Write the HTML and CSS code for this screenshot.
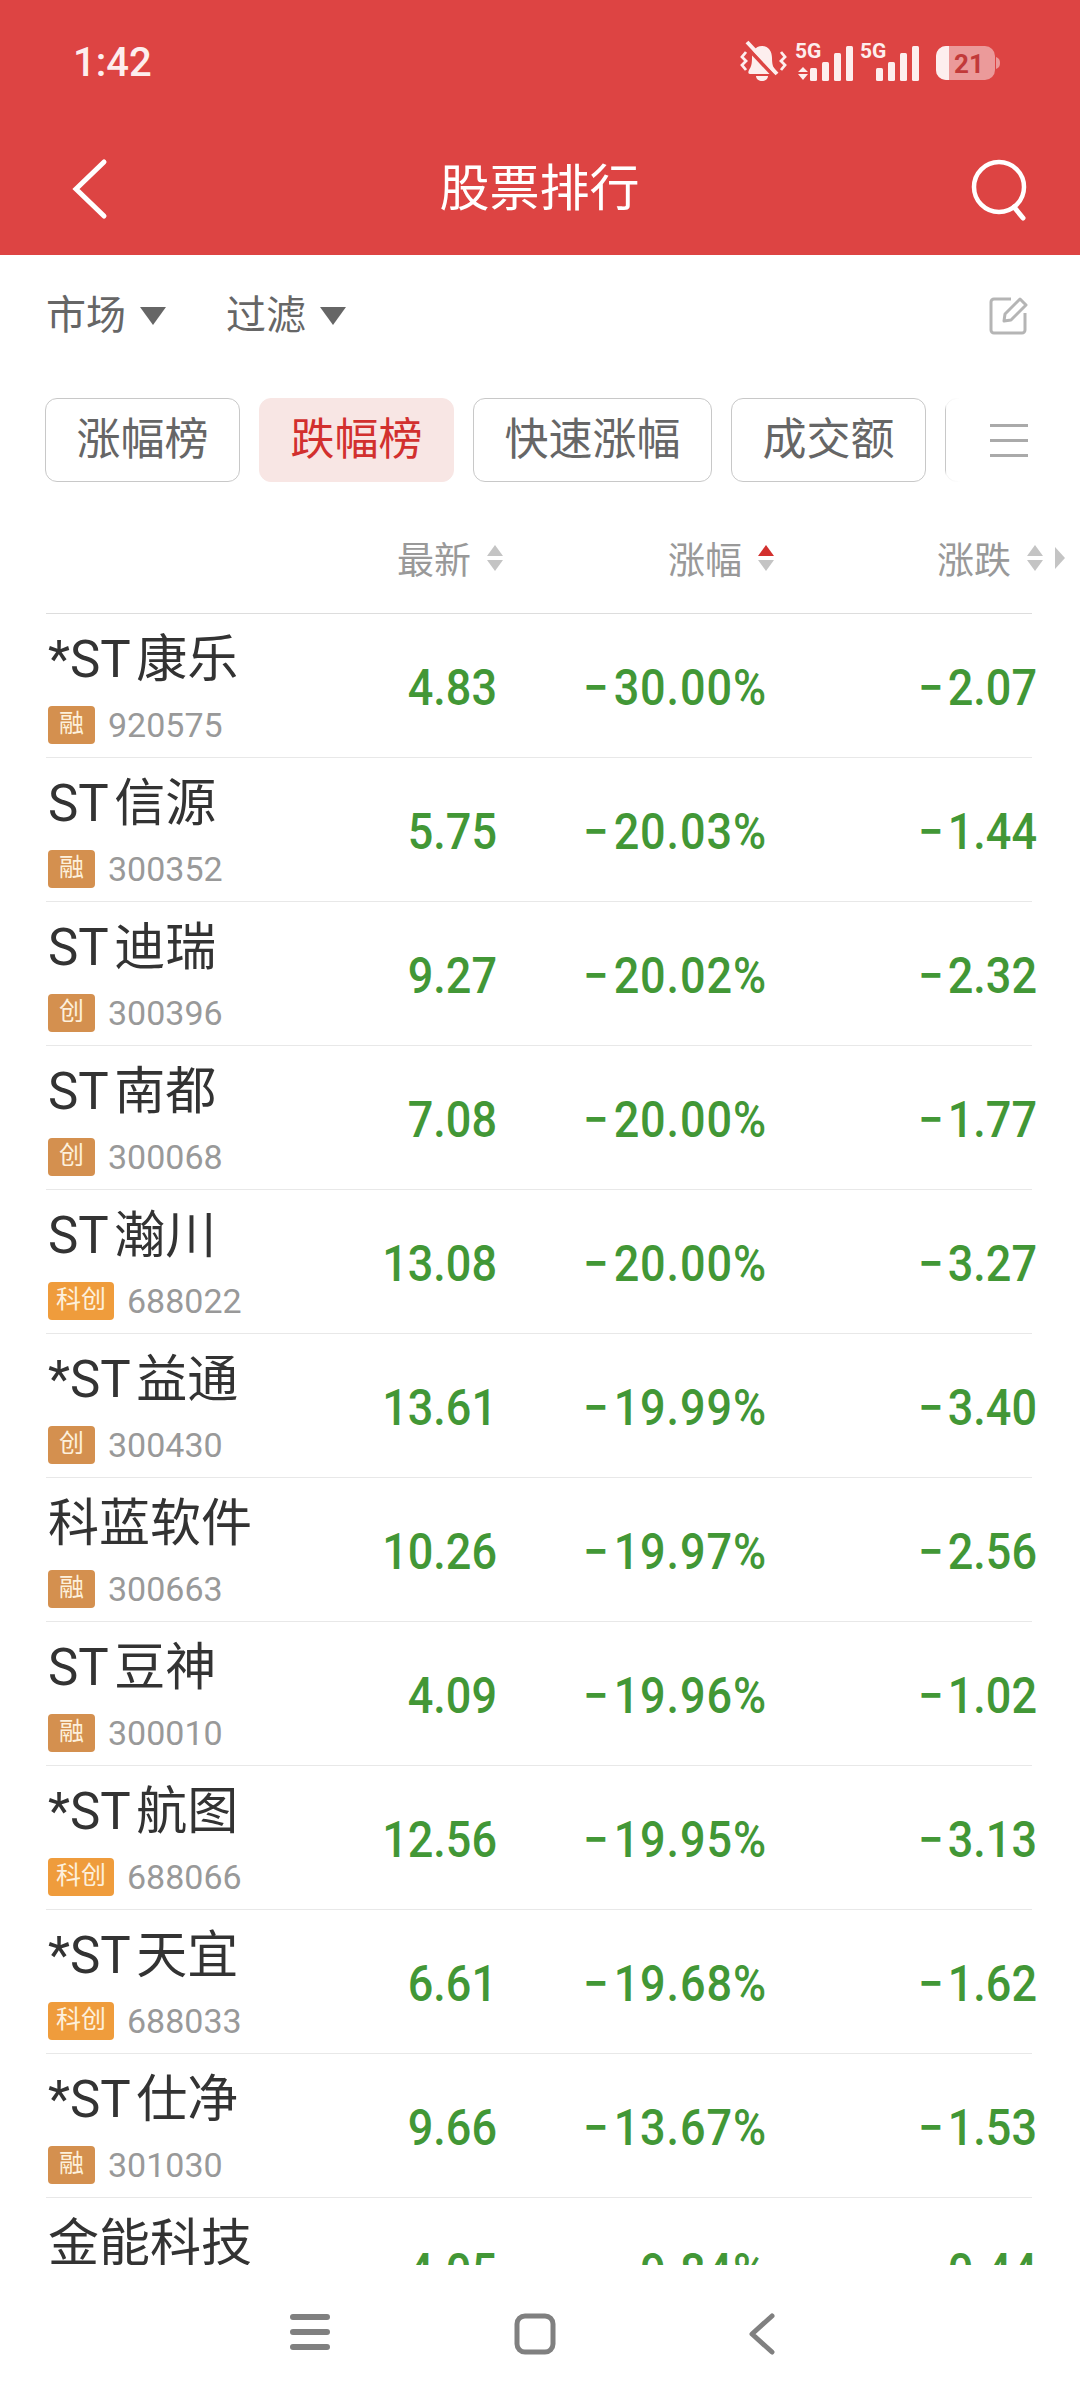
FILE: index.html
```html
<!DOCTYPE html>
<html lang="zh-CN">
<head>
    <meta charset="UTF-8">
    <meta name="viewport" content="width=device-width, initial-scale=1.0">
    <title>股票排行</title>
    <link rel="stylesheet" href="styles.css">
</head>
<body>
    <div class="phone">
        <header class="top">
            <div class="status-bar">
                <span class="time">1:42</span>
                <div class="status-icons">
                    <svg class="ic-bell" width="47" height="42" viewBox="0 0 47 42">
                        <path d="M22 5c-7 0-10 6-10 12 0 6-1 9-3 12-1 2-1 4 1 4h24c2 0 2-2 1-4-2-3-3-6-3-12 0-6-3-12-10-12z" fill="#fdeeee"/>
                        <path d="M16 35h12c0 3-3 5-6 5s-6-2-6-5z" fill="#fdeeee"/>
                        <path d="M4 3l30 32" stroke="#dd4443" stroke-width="4"/>
                        <path d="M7 1l30 32" stroke="#fdeeee" stroke-width="4"/>
                        <path d="M6 11L2 16l4 4-4 4 4 5M41 11l4 5-4 4 4 4-4 5" stroke="#fdeeee" stroke-width="2.8" fill="none"/>
                    </svg>
                    <svg class="ic-signal" width="60" height="40" viewBox="0 0 60 40">
                        <text x="0" y="16" class="net">5G</text>
                        <path d="M8 25l5 5H3zM3 32h10l-5 6z" fill="#fdeeee"/>
                        <rect x="15" y="26" width="7" height="13" rx="1.5" fill="#fdeeee"/>
                        <rect x="27" y="20" width="7" height="19" rx="1.5" fill="#fdeeee"/>
                        <rect x="39" y="11" width="7" height="28" rx="1.5" fill="#fdeeee"/>
                        <rect x="51" y="4" width="7" height="35" rx="1.5" fill="#fdeeee"/>
                    </svg>
                    <svg class="ic-signal" width="60" height="40" viewBox="0 0 60 40">
                        <text x="0" y="16" class="net">5G</text>
                        <rect x="16" y="26" width="7" height="13" rx="1.5" fill="#fdeeee"/>
                        <rect x="28" y="20" width="7" height="19" rx="1.5" fill="#fdeeee"/>
                        <rect x="40" y="11" width="7" height="28" rx="1.5" fill="#fdeeee"/>
                        <rect x="52" y="4" width="7" height="35" rx="1.5" fill="#fdeeee"/>
                    </svg>
                    <svg class="ic-battery" width="64" height="36" viewBox="0 0 64 36">
                        <rect x="0" y="1" width="59" height="34" rx="10" fill="#eb9a9a"/>
                        <path d="M10 1h3v34h-3a10 10 0 0 1-10-10V11A10 10 0 0 1 10 1z" fill="#fdeeee"/>
                        <path d="M60 12c3 1 4 3 4 6s-1 5-4 6z" fill="#eb9a9a"/>
                        <text x="33" y="28" class="batt">21</text>
                    </svg>
                </div>
            </div>
            <div class="title-bar">
                <svg width="40" height="60" viewBox="0 0 40 60">
                    <path d="M35 3L7 30l28 27" fill="none" stroke="#fff" stroke-width="5" stroke-linecap="round"/>
                </svg>
                <h1 class="title">股票排行</h1>
                <svg width="60" height="60" viewBox="0 0 60 60">
                    <circle cx="29" cy="28" r="25" fill="none" stroke="#fff" stroke-width="4.5"/>
                    <path d="M44 48l9 11" stroke="#fff" stroke-width="5" stroke-linecap="round"/>
                </svg>
            </div>
        </header>

        <div class="filters">
            <div class="filter">市场<span class="caret"></span></div>
            <div class="filter">过滤<span class="caret"></span></div>
            <svg class="edit" width="38" height="38" viewBox="0 0 38 38">
                <path d="M22 2H5a3 3 0 0 0-3 3v28a3 3 0 0 0 3 3h28a3 3 0 0 0 3-3V16" fill="none" stroke="#b5b5b5" stroke-width="3"/>
                <path d="M15 24l1-7L31 2l6 6-15 15z" fill="none" stroke="#b5b5b5" stroke-width="3" stroke-linejoin="round"/>
            </svg>
        </div>

        <div class="tabs">
            <div class="chip">涨幅榜</div>
            <div class="chip active">跌幅榜</div>
            <div class="chip">快速涨幅</div>
            <div class="chip">成交额</div>
            <div class="chip chip-hidden"></div>
            <div class="tabs-more">
                <span></span><span></span><span></span>
            </div>
        </div>

        <div class="table-head">
            <div class="th">最新<span class="sort"><i class="up"></i><i class="down"></i></span></div>
            <div class="th">涨幅<span class="sort"><i class="up on"></i><i class="down"></i></span></div>
            <div class="th">涨跌<span class="sort"><i class="up"></i><i class="down"></i></span><span class="more-cols"></span></div>
        </div>

        <div class="list">
            <div class="row">
                <div class="stock"><div class="name">*ST 康乐</div><div class="meta"><span class="tag">融</span><span class="code">920575</span></div></div>
                <div class="num">4.83</div><div class="num">−30.00%</div><div class="num">−2.07</div>
            </div>
            <div class="row">
                <div class="stock"><div class="name">ST 信源</div><div class="meta"><span class="tag">融</span><span class="code">300352</span></div></div>
                <div class="num">5.75</div><div class="num">−20.03%</div><div class="num">−1.44</div>
            </div>
            <div class="row">
                <div class="stock"><div class="name">ST 迪瑞</div><div class="meta"><span class="tag">创</span><span class="code">300396</span></div></div>
                <div class="num">9.27</div><div class="num">−20.02%</div><div class="num">−2.32</div>
            </div>
            <div class="row">
                <div class="stock"><div class="name">ST 南都</div><div class="meta"><span class="tag">创</span><span class="code">300068</span></div></div>
                <div class="num">7.08</div><div class="num">−20.00%</div><div class="num">−1.77</div>
            </div>
            <div class="row">
                <div class="stock"><div class="name">ST 瀚川</div><div class="meta"><span class="tag star">科创</span><span class="code">688022</span></div></div>
                <div class="num">13.08</div><div class="num">−20.00%</div><div class="num">−3.27</div>
            </div>
            <div class="row">
                <div class="stock"><div class="name">*ST 益通</div><div class="meta"><span class="tag">创</span><span class="code">300430</span></div></div>
                <div class="num">13.61</div><div class="num">−19.99%</div><div class="num">−3.40</div>
            </div>
            <div class="row">
                <div class="stock"><div class="name">科蓝软件</div><div class="meta"><span class="tag">融</span><span class="code">300663</span></div></div>
                <div class="num">10.26</div><div class="num">−19.97%</div><div class="num">−2.56</div>
            </div>
            <div class="row">
                <div class="stock"><div class="name">ST 豆神</div><div class="meta"><span class="tag">融</span><span class="code">300010</span></div></div>
                <div class="num">4.09</div><div class="num">−19.96%</div><div class="num">−1.02</div>
            </div>
            <div class="row">
                <div class="stock"><div class="name">*ST 航图</div><div class="meta"><span class="tag star">科创</span><span class="code">688066</span></div></div>
                <div class="num">12.56</div><div class="num">−19.95%</div><div class="num">−3.13</div>
            </div>
            <div class="row">
                <div class="stock"><div class="name">*ST 天宜</div><div class="meta"><span class="tag star">科创</span><span class="code">688033</span></div></div>
                <div class="num">6.61</div><div class="num">−19.68%</div><div class="num">−1.62</div>
            </div>
            <div class="row">
                <div class="stock"><div class="name">*ST 仕净</div><div class="meta"><span class="tag">融</span><span class="code">301030</span></div></div>
                <div class="num">9.66</div><div class="num">−13.67%</div><div class="num">−1.53</div>
            </div>
            <div class="row">
                <div class="stock"><div class="name">金能科技</div></div>
                <div class="num">4.05</div><div class="num">−9.84%</div><div class="num">−0.44</div>
            </div>
        </div>

        <nav class="nav-bar">
            <svg width="40" height="38" viewBox="0 0 40 38">
                <path d="M3 4h34M3 19h34M3 34h34" stroke="#808080" stroke-width="6" stroke-linecap="round"/>
            </svg>
            <svg class="nav-home" width="42" height="42" viewBox="0 0 42 42">
                <rect x="3" y="3" width="36" height="36" rx="8" fill="none" stroke="#808080" stroke-width="5"/>
            </svg>
            <svg class="nav-back" width="28" height="42" viewBox="0 0 28 42">
                <path d="M25 3L5 21l20 18" fill="none" stroke="#808080" stroke-width="5" stroke-linecap="round" stroke-linejoin="round"/>
            </svg>
        </nav>
    </div>
</body>
</html>
```

FILE: styles.css
```css
:root {
    --red: #dd4443;
    --green: #429736;
    --line: #e8e8e8;
}

* {
    margin: 0;
    padding: 0;
    box-sizing: border-box;
    font-family: Roboto, 'Noto Sans CJK SC', sans-serif;
}

body {
    background: #fff;
}

svg {
    overflow: visible;
}

.phone {
    width: 1080px;
    height: 2400px;
    display: flex;
    flex-direction: column;
    overflow: hidden;
}

/* red header */
.top {
    height: 255px;
    background: var(--red);
    color: #fff;
}

.status-bar {
    height: 154px;
    padding: 40px 81px 0 73px;
    display: flex;
    justify-content: space-between;
    align-items: flex-start;
}

.time {
    font-size: 40px;
    font-weight: 500;
    line-height: 46px;
    color: #fdeeee;
}

.status-icons {
    display: flex;
    align-items: flex-start;
    gap: 5px;
}

.ic-bell {
    margin-top: 1px;
    margin-right: 3px;
}

.ic-signal {
    margin-top: 2px;
}

.ic-battery {
    margin-top: 5px;
    margin-left: 11px;
    margin-right: -1px;
}

.net {
    font-size: 21px;
    font-weight: 700;
    fill: #fdeeee;
}

.batt {
    font-size: 26px;
    font-weight: 700;
    fill: #c23a3a;
    text-anchor: middle;
}

.title-bar {
    display: flex;
    justify-content: space-between;
    align-items: center;
    padding: 0 50px 0 69px;
    height: 70px;
}

.title {
    font-size: 50px;
    font-weight: 400;
    line-height: 70px;
}

/* filter row */
.filters {
    height: 122px;
    padding: 0 53px 0 46px;
    display: flex;
    align-items: center;
    gap: 60px;
}

.filter {
    display: flex;
    align-items: center;
    font-size: 40px;
    line-height: 56px;
    color: #666;
}

.caret {
    width: 0;
    height: 0;
    margin-left: 14px;
    border-left: 13px solid transparent;
    border-right: 13px solid transparent;
    border-top: 18px solid #666;
}

.edit {
    margin-left: auto;
}

/* chips */
.tabs {
    position: relative;
    margin-top: 21px;
    height: 84px;
    padding-left: 45px;
    display: flex;
    gap: 19px;
    overflow: hidden;
}

.chip {
    flex: none;
    height: 84px;
    padding: 0 30.5px;
    border: 1.5px solid #c8c8c8;
    border-radius: 12px;
    font-size: 44px;
    line-height: 83px;
    color: #666;
}

.chip.active {
    background: #f8e6e4;
    border-color: #f8e6e4;
    color: #d2302e;
}

.chip-hidden {
    width: 195px;
}

.tabs-more {
    position: absolute;
    top: 0;
    right: 0;
    width: 134px;
    height: 84px;
    padding-left: 44px;
    display: flex;
    flex-direction: column;
    justify-content: center;
    gap: 12px;
    background: linear-gradient(90deg, rgba(255,255,255,0.75), #fff 14px);
}

.tabs-more span {
    width: 38px;
    height: 3px;
    background: #aaa;
}

/* table head */
.table-head {
    height: 132px;
    margin: 0 48px 0 46px;
    display: grid;
    grid-template-columns: 457px 271px 1fr;
    border-bottom: 1.5px solid #ddd;
    padding-top: 51px;
}

.th {
    display: flex;
    justify-content: flex-end;
    align-items: center;
    height: 50px;
    font-size: 37px;
    color: #999;
}

.th:last-child {
    margin-right: -33px;
}

.sort {
    display: flex;
    flex-direction: column;
    gap: 4px;
    margin-left: 16px;
}

.sort i {
    display: block;
    width: 0;
    height: 0;
    border-left: 8.5px solid transparent;
    border-right: 8.5px solid transparent;
}

.sort .up {
    border-bottom: 11px solid #c4c4c4;
}

.sort .up.on {
    border-bottom-color: #d2302e;
}

.sort .down {
    border-top: 11px solid #c4c4c4;
}

.more-cols {
    width: 0;
    height: 0;
    margin-left: 12px;
    border-top: 11px solid transparent;
    border-bottom: 11px solid transparent;
    border-left: 10px solid #c4c4c4;
}

/* stock rows */
.list {
    flex: 1;
    min-height: 0;
    overflow: hidden;
}

.row {
    height: 144px;
    margin: 0 48px 0 46px;
    display: grid;
    grid-template-columns: 451px 270px 265px;
    border-bottom: 1.5px solid var(--line);
}

.stock {
    grid-column: 1;
    grid-row: 1;
    padding-top: 13px;
    padding-left: 2px;
}

.name {
    font-size: 51px;
    line-height: 66px;
    word-spacing: -6px;
    color: #333;
}

.meta {
    display: flex;
    align-items: center;
    margin-top: 13px;
    height: 38px;
}

.tag {
    height: 38px;
    padding: 0 11px;
    border-radius: 4px;
    background: #d4904f;
    color: #fdf0dc;
    font-size: 25px;
    line-height: 36px;
}

.tag.star {
    background: #ef9c3c;
    padding: 0 8px;
}

.code {
    margin-left: 13px;
    font-size: 34px;
    color: #999;
}

/* digits in the reference are taller and narrower than Roboto */
.num {
    grid-row: 1;
    padding-top: 44px;
    text-align: right;
    font-size: 50px;
    font-weight: 500;
    line-height: 60px;
    color: var(--green);
    transform: scaleX(0.9);
    transform-origin: right center;
}

.num:nth-child(2) {
    grid-column: 1;
}

.num:nth-child(3) {
    grid-column: 2;
    letter-spacing: 1px;
}

.num:nth-child(4) {
    grid-column: 3;
    margin-right: -5px;
}

.num:nth-child(n+3)::first-letter {
    margin-right: 5px;
}

/* android nav */
.nav-bar {
    height: 135px;
    flex: none;
    background: #fff;
    display: flex;
    align-items: flex-start;
    padding: 48px 0 0 290px;
}

.nav-home {
    margin-left: 184px;
}

.nav-back {
    margin-left: 191px;
}
```
